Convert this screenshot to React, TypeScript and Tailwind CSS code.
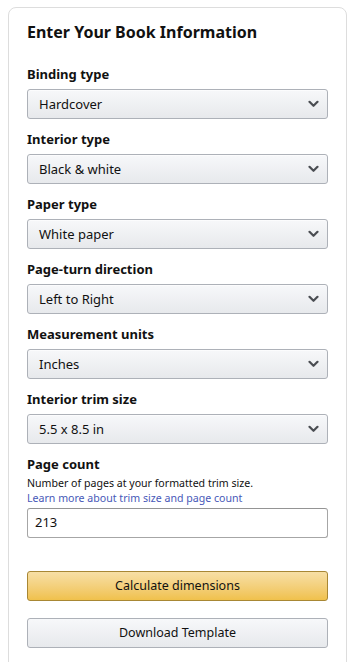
import React from 'react';

const fields = [
  { label: 'Binding type', value: 'Hardcover' },
  { label: 'Interior type', value: 'Black & white' },
  { label: 'Paper type', value: 'White paper' },
  { label: 'Page-turn direction', value: 'Left to Right' },
  { label: 'Measurement units', value: 'Inches' },
  { label: 'Interior trim size', value: '5.5 x 8.5 in' },
];

const Chevron = () => (
  <svg width="11" height="8" viewBox="0 0 11 8" fill="none">
    <path d="M1.5 1.8 L5.5 5.8 L9.5 1.8" stroke="#4a4d52" strokeWidth="2.2" strokeLinecap="round" strokeLinejoin="round" />
  </svg>
);

const App: React.FC = () => {
  return (
    <div className="min-h-[662px] bg-white pt-[7px] pl-2 pr-[9px] font-['Noto_Sans',sans-serif] text-[#111]">
      <div className="border border-[#dddddd] rounded-lg px-[18px] pt-3 pb-4 h-[670px]">
        <h1 className="text-[16px] leading-6 font-bold mb-[21px]">Enter Your Book Information</h1>

        {fields.map((f) => (
          <div key={f.label} className="mb-[11px]">
            <div className="text-[13px] leading-[19px] font-bold mb-[5px]">{f.label}</div>
            <div className="h-[30px] flex items-center justify-between pl-[11px] pr-[8px] rounded-[3px] border border-[#adb1b8] bg-gradient-to-b from-[#f7f8fa] to-[#e7e9ec] shadow-[0_1px_0_rgba(255,255,255,0.6)_inset]">
              <span className="text-[13px] pt-px">{f.value}</span>
              <Chevron />
            </div>
          </div>
        ))}

        <div className="text-[13px] leading-[19px] font-bold">Page count</div>
        <div className="text-[10.6px] leading-[15px] mt-[2px]">Number of pages at your formatted trim size.</div>
        <a className="block text-[10.6px] leading-[15px] text-[#4758b8]">Learn more about trim size and page count</a>
        <div className="mt-[2px] h-[30px] flex items-center px-[7px] rounded-[3px] border border-[#a6a6a6] border-t-[#949494] bg-white text-[13px]">
          213
        </div>

        <button className="mt-[33px] w-full h-[30px] rounded-[3px] border border-[#a88734] bg-gradient-to-b from-[#f7dfa5] to-[#f0c14b] text-[12.5px] text-[#111]">
          Calculate dimensions
        </button>
        <button className="mt-[17px] w-full h-[30px] rounded-[3px] border border-[#adb1b8] bg-gradient-to-b from-[#f7f8fa] to-[#e7e9ec] text-[12.5px] text-[#111]">
          Download Template
        </button>
      </div>
    </div>
  );
};

export default App;
